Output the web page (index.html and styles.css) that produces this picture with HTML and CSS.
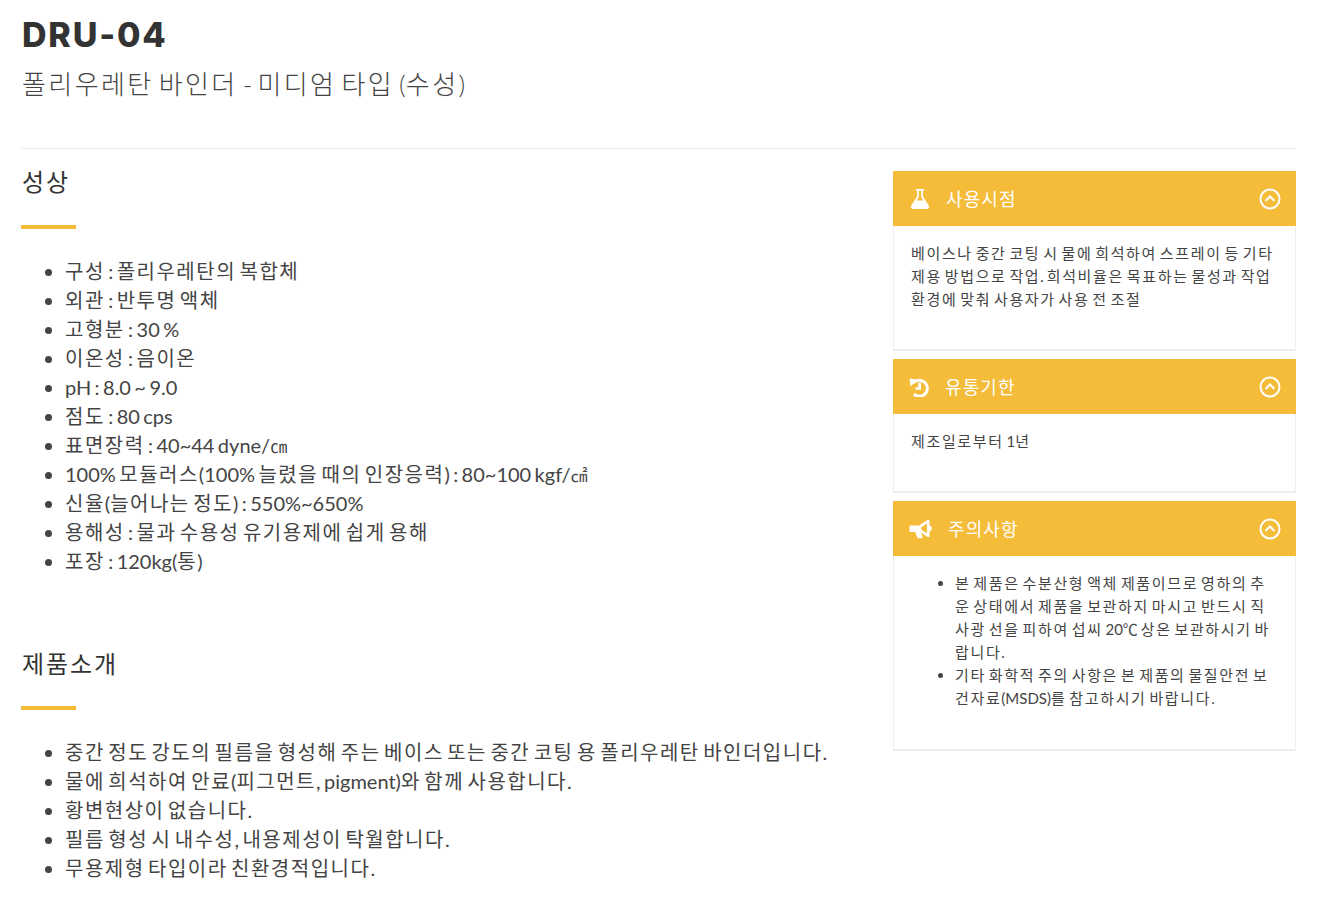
FILE: index.html
```html
<!DOCTYPE html>
<html lang="ko">
<head>
<meta charset="utf-8">
<title>DRU-04</title>
<link rel="stylesheet" href="styles.css">
</head>
<body>
<header class="head">
  <h1 class="title">DRU-04</h1>
  <p class="subtitle"><b>폴리우레탄</b> <b>바인더</b> - <b>미디엄</b> <b>타입</b> (<b>수성</b>)</p>
</header>
<div class="cols">
  <main class="main">
    <h2 class="sec-title"><b>성상</b></h2>
    <div class="bar"></div>
    <ul class="list">
      <li><b>구성</b> : <b>폴리우레탄의</b> <b>복합체</b></li>
      <li><b>외관</b> : <b>반투명</b> <b>액체</b></li>
      <li><b>고형분</b> : 30 %</li>
      <li><b>이온성</b> : <b>음이온</b></li>
      <li>pH : 8.0 ~ 9.0</li>
      <li><b>점도</b> : 80 cps</li>
      <li><b>표면장력</b> : 40~44 dyne/<span class="unit">㎝</span></li>
      <li>100% <b>모듈러스</b>(100% <b>늘렸을</b> <b>때의</b> <b>인장응력</b>) : 80~100 kgf/<span class="unit">㎠</span></li>
      <li><b>신율</b>(<b>늘어나는</b> <b>정도</b>) : 550%~650%</li>
      <li><b>용해성</b> : <b>물과</b> <b>수용성</b> <b>유기용제에</b> <b>쉽게</b> <b>용해</b></li>
      <li><b>포장</b> : 120kg(<b>통</b>)</li>
    </ul>
    <h2 class="sec-title second"><b>제품소개</b></h2>
    <div class="bar"></div>
    <ul class="list">
      <li><b>중간</b> <b>정도</b> <b>강도의</b> <b>필름을</b> <b>형성해</b> <b>주는</b> <b>베이스</b> <b>또는</b> <b>중간</b> <b>코팅</b> <b>용</b> <b>폴리우레탄</b> <b>바인더입니다</b>.</li>
      <li><b>물에</b> <b>희석하여</b> <b>안료</b>(<b>피그먼트</b>, pigment)<b>와</b> <b>함께</b> <b>사용합니다</b>.</li>
      <li><b>황변현상이</b> <b>없습니다</b>.</li>
      <li><b>필름</b> <b>형성</b> <b>시</b> <b>내수성</b>, <b>내용제성이</b> <b>탁월합니다</b>.</li>
      <li><b>무용제형</b> <b>타입이라</b> <b>친환경적입니다</b>.</li>
    </ul>
  </main>
  <aside class="side">
    <section class="panel">
      <div class="panel-head">
        <svg class="ico" viewBox="0 0 20 20"><path fill="#fff" d="M6 0h8v1.800h-1v5.700l5.700 9c.9 1.500 0 3.500-1.800 3.500H3.100c-1.800 0-2.700-2-1.800-3.500L7 7.500V1.800H6zM8.800 1.800v6.300L6.800 11.500h6.400l-2-3.400V1.800z"/></svg>
        <span class="panel-title t1"><b>사용시점</b></span>
        <svg class="chev" viewBox="0 0 22 22"><circle cx="11" cy="11" r="9.500" fill="none" stroke="#fff" stroke-width="2"/><path d="M6.500 13l4.500-4.500 4.500 4.500" fill="none" stroke="#fff" stroke-width="2"/></svg>
      </div>
      <div class="panel-body b1"><b>베이스나</b> <b>중간</b> <b>코팅</b> <b>시</b> <b>물에</b> <b>희석하여</b> <b>스프레이</b> <b>등</b> <b>기타</b> <b>제용</b> <b>방법으로</b> <b>작업</b>. <b>희석비율은</b> <b>목표하는</b> <b>물성과</b> <b>작업</b> <b>환경에</b> <b>맞춰</b> <b>사용자가</b> <b>사용</b> <b>전</b> <b>조절</b></div>
    </section>
    <section class="panel">
      <div class="panel-head">
        <svg class="ico hist" viewBox="0 0 20 20"><path fill="none" stroke="#fff" stroke-width="3" d="M4.500 5.800A8 8 0 1 1 5 17.200"/><path fill="#fff" d="M.5 1.500l8 1.200-7 6.800zM9.300 5.500h2.700v7.200H6.500v-2.500h2.800z"/></svg>
        <span class="panel-title t2"><b>유통기한</b></span>
        <svg class="chev" viewBox="0 0 22 22"><circle cx="11" cy="11" r="9.500" fill="none" stroke="#fff" stroke-width="2"/><path d="M6.500 13l4.500-4.500 4.500 4.500" fill="none" stroke="#fff" stroke-width="2"/></svg>
      </div>
      <div class="panel-body b2"><b>제조일로부터</b> 1<b>년</b></div>
    </section>
    <section class="panel">
      <div class="panel-head">
        <svg class="ico wide" viewBox="0 0 24 20"><path fill="#fff" d="M1.500 6.500H10L18.500 1h2v5.500c1.500.4 2.500 1.500 2.500 2.800s-1 2.400-2.500 2.800V18h-2L12 13.200l1.500 4.300c.3 1-.4 1.800-1.300 1.800H9.500c-.7 0-1.200-.4-1.400-1L6.300 13H1.500A1 1 0 0 1 .5 12V7.500a1 1 0 0 1 1-1zM18 4.500l-5.700 3.700v2.400l5.700 3.700z"/></svg>
        <span class="panel-title t3"><b>주의사항</b></span>
        <svg class="chev" viewBox="0 0 22 22"><circle cx="11" cy="11" r="9.500" fill="none" stroke="#fff" stroke-width="2"/><path d="M6.500 13l4.500-4.500 4.500 4.500" fill="none" stroke="#fff" stroke-width="2"/></svg>
      </div>
      <div class="panel-body b3">
        <ul class="notes">
          <li><b>본</b> <b>제품은</b> <b>수분산형</b> <b>액체</b> <b>제품이므로</b> <b>영하의</b> <b>추</b><wbr><b>운</b> <b>상태에서</b> <b>제품을</b> <b>보관하지</b> <b>마시고</b> <b>반드시</b> <b>직</b><wbr><b>사광</b> <b>선을</b> <b>피하여</b> <b>섭씨</b> 20℃ <b>상온</b> <b>보관하시기</b> <b>바</b><wbr><b>랍니다</b>.</li>
          <li><b>기타</b> <b>화학적</b> <b>주의</b> <b>사항은</b> <b>본</b> <b>제품의</b> <b>물질안전</b> <b>보</b><wbr><b>건자료</b>(MSDS)<b>를</b> <b>참고하시기</b> <b>바랍니다</b>.</li>
        </ul>
      </div>
    </section>
  </aside>
</div>
```

FILE: styles.css
```css
* { box-sizing: border-box; }
html, body { margin: 0; padding: 0; background: #fff; }
body {
  padding: 0 29px 0 21px;
  font-family: Lato, "Noto Sans CJK KR", sans-serif;
  color: #444;
}
b { font-weight: inherit; }
.head { height: 149px; border-bottom: 1px solid #eee; padding-top: 13px; }
.title {
  margin: 0 0 0 1px;
  font-family: Inter, "Noto Sans CJK KR", sans-serif;
  font-size: 34px;
  line-height: 44px;
  font-weight: 800;
  letter-spacing: 1.800px;
  color: #333;
}
.subtitle { margin: 7px 0 0 1px; font-size: 26px; line-height: 40px; font-weight: 300; word-spacing: -2px; color: #444; }
.subtitle b { letter-spacing: 2.400px; }
.cols { display: flex; justify-content: space-between; align-items: flex-start; }
.main { width: 840px; }
.sec-title { margin: 15px 0 0 1px; font-size: 24px; line-height: 36px; font-weight: 400; color: #333; }
.sec-title b { letter-spacing: 1.900px; }
.sec-title.second { margin-top: 69px; }
.bar { width: 55px; height: 4px; background: #f5bc3a; margin-top: 25px; }
.second + .bar { margin-top: 24px; }
.list { margin: 27.500px 0 0; padding: 0 0 0 44px; font-size: 20px; line-height: 29.100px; word-spacing: -1.700px; }
.second + .bar + .list { margin-top: 28.500px; }
.list b { letter-spacing: 1.500px; }
.unit { font-size: 17px; line-height: 1; }
.side { width: 403px; padding-top: 22px; }
.panel { margin-bottom: 8px; }
.panel-head {
  height: 55px;
  background: #f5bc3a;
  color: #fff;
  display: flex;
  align-items: center;
  padding: 0 15px 0 16px;
}
.ico { width: 22px; height: 20px; flex: none; }
.ico.wide { width: 24px; }
.ico.hist { margin-left: -1px; }
.panel-title { font-size: 18px; font-weight: 400; margin-top: -2px; }
.panel-title b { letter-spacing: 1.100px; }
.t1 { margin-left: 15px; }
.t2 { margin-left: 15px; }
.t3 { margin-left: 15px; }
.chev { width: 22px; height: 22px; margin-left: auto; flex: none; }
.panel-body {
  border: 1px solid #eee;
  border-top: 0;
  border-bottom-width: 2px;
  padding: 16px 17px 0;
  font-size: 15px;
  line-height: 23px;
  word-spacing: -1px;
  color: #444;
}
.panel-body b { letter-spacing: 1.650px; }
.b1 { height: 125px; }
.b2 { height: 79px; }
.b3 { height: 195px; }
.notes { margin: 0; padding: 0 0 0 44px; }
```
